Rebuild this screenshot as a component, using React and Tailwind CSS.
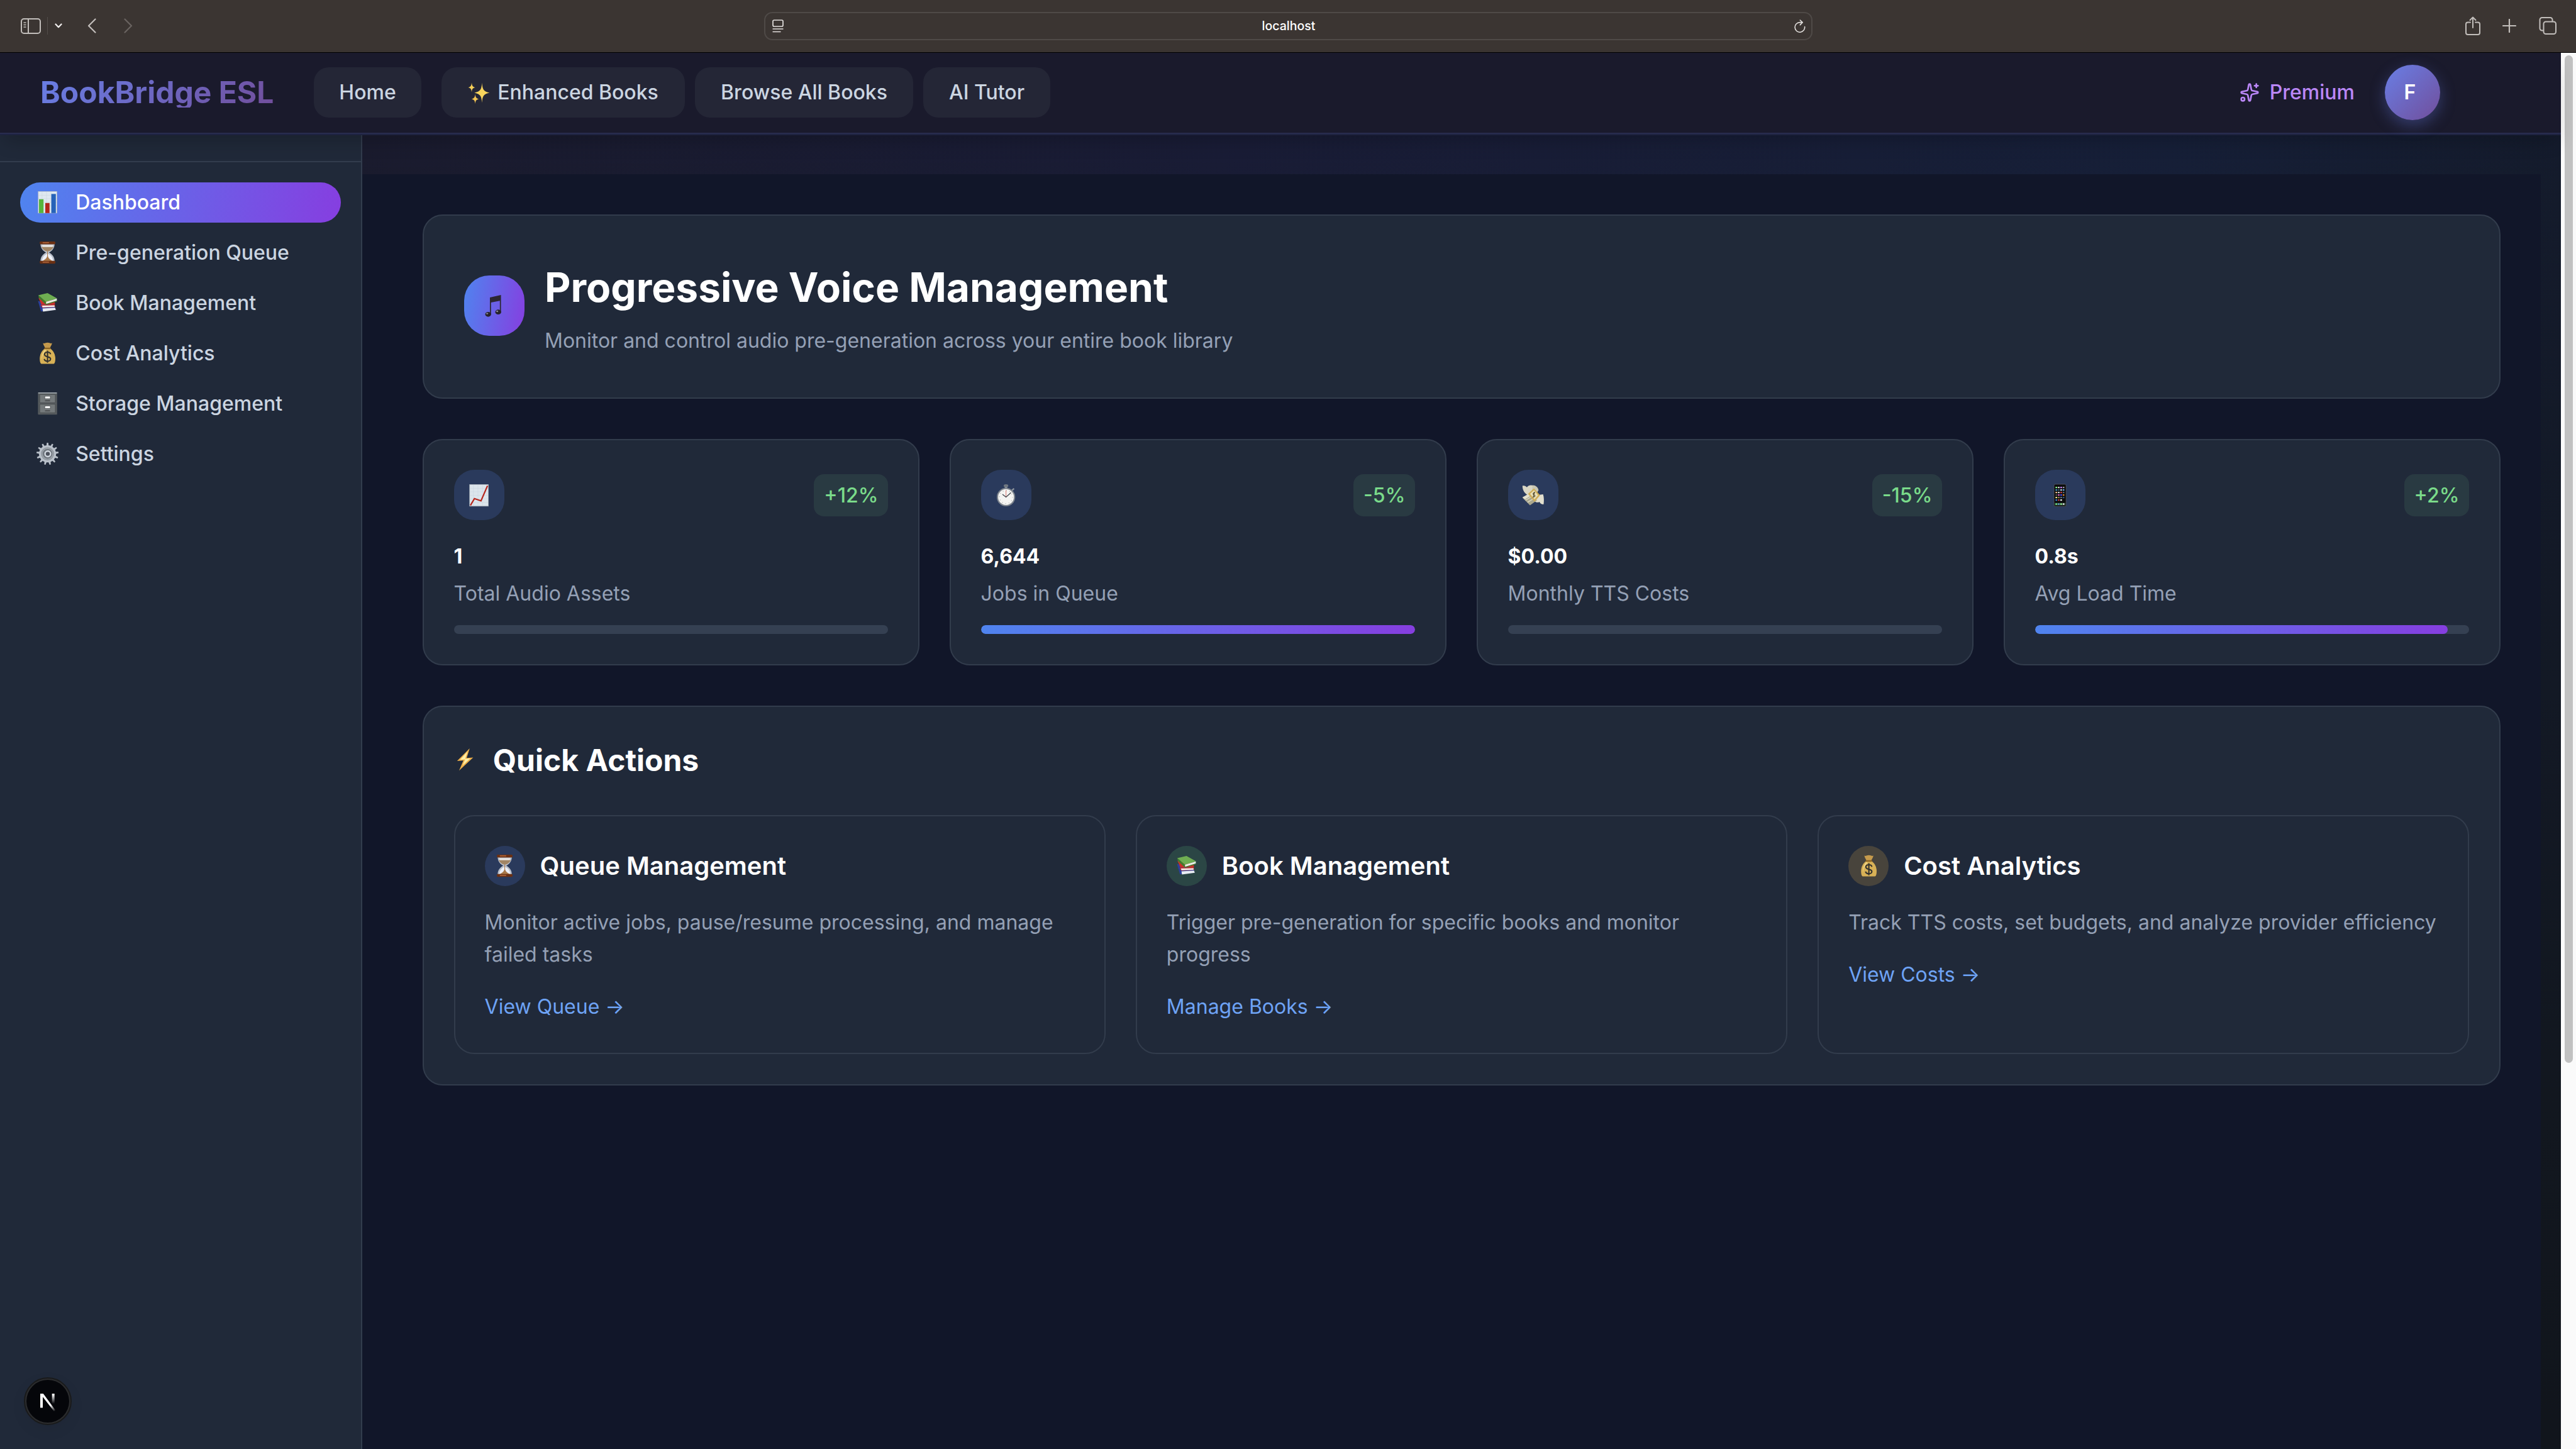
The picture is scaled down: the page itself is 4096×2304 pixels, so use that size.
import React from "react";
import { Sparkles } from "lucide-react";

/* ---------- emoji-style pictograms (44 x 44 grid) ---------- */

function Emoji({ children }) {
  return (
    <svg viewBox="0 0 44 44" className="block h-[35.2px] w-[35.2px] shrink-0 overflow-visible">
      {children}
    </svg>
  );
}

const BarChart = () => (
  <Emoji>
    <rect x="3.5" y="0.5" width="37" height="43" fill="#dfe8f0" stroke="#b4bcc6" />
    <path d="M4 8h36M4 15h36M4 22h36M4 29h36M4 36h36M11 1v42M20 1v42M29 1v42" stroke="#cbd6e0" strokeWidth="0.7" />
    <rect x="5" y="16" width="9" height="27.5" fill="#56b53c" />
    <rect x="17.5" y="23.500" width="8.500" height="20" fill="#b3261c" />
    <rect x="29.5" y="5.500" width="9" height="38" fill="#2562b8" />
  </Emoji>
);

const Hourglass = () => (
  <Emoji>
    <path d="M8 5h28c0 8-5 14-11 17 6 3 11 9 11 17H8c0-8 5-14 11-17C13 19 8 13 8 5z" fill="#b9bfca" />
    <path d="M11 7h22c-1 6-5 11-11 13C16 18 12 13 11 7z" fill="#e9e6e2" />
    <path d="M10 11c2 4 6 8 12 9 6-1 10-5 12-9z" fill="#a18565" />
    <path d="M11 38c1-7 5-12 11-14 6 2 10 7 11 14z" fill="#eef0f8" />
    <path d="M12 39c3-3 8-4 9.300-10V20h1.400v9C24 35 29 36 32 39z" fill="#a9794a" />
    <rect x="6.500" y="0" width="31" height="5.500" rx="1.800" fill="#6b3013" />
    <rect x="12" y="1.200" width="13" height="2.200" rx="1" fill="#a8623a" />
    <rect x="6.500" y="38.500" width="31" height="5.500" rx="1.800" fill="#6b3013" />
    <rect x="12" y="40" width="13" height="2.200" rx="1" fill="#a8623a" />
  </Emoji>
);

const Books = () => (
  <Emoji>
    <path d="M3 18l6 21 29-3.500-2-8z" fill="#2b3f9b" />
    <path d="M12 33l25-1.500 1.500 4.500L13 39.500z" fill="#e9ecf2" />
    <path d="M4 12l6 14 27-1-1-7z" fill="#c9302a" />
    <path d="M8 26.500l28-1.500 1.500 5L12 32z" fill="#c9302a" />
    <path d="M11 27.500l25-.5v3l-24 1z" fill="#f0eeee" />
    <path d="M3.500 7L22 2.500 41 13 19 20z" fill="#6fae52" />
    <path d="M3.500 7L19 20v5.500L5 12.500z" fill="#3f7d2e" />
    <path d="M19 20l21.500-6.500v4L19.500 24.500z" fill="#e9efe6" />
    <path d="M19 24l22-6.500v1.500L19 26z" fill="#3f7d2e" />
  </Emoji>
);

const MoneyBag = () => (
  <Emoji>
    <path d="M13 2c3 1.500 5-1 9-1s6 2.500 9 1c-.5 4-4 8-4.500 11h-9C17 10 13.500 6 13 2z" fill="#c59a4c" />
    <path d="M17 12.500h10C34 17 37.500 25 37.500 33c0 5-1 9-3 10h-25c-2-1-3-5-3-10 0-8 3.500-16 10.500-20.500z" fill="#d8b156" />
    <path d="M17 15c-5 5-7 12-6.500 20 1-7 3-14 9-19.500z" fill="#f1d98c" />
    <rect x="15.500" y="11" width="13" height="3" rx="1.500" fill="#8d6524" />
    <path d="M28 24c-.5-2.500-3-4-6-4s-6 1.500-6 4.500c0 6.500 12 3 12 9 0 3-3 4.500-6 4.500s-6-1.500-6.500-4.500M22 17v24" fill="none" stroke="#33322f" strokeWidth="2.600" />
  </Emoji>
);

const Cabinet = () => (
  <Emoji>
    <rect x="3" y="0" width="38" height="44" rx="1" fill="#565b5e" />
    <rect x="3.500" y="0" width="37" height="2" fill="#a5adb2" />
    <rect x="6.500" y="4" width="31" height="16.500" rx="1" fill="#74797b" stroke="#44484a" />
    <rect x="6.500" y="23.500" width="31" height="17" rx="1" fill="#74797b" stroke="#44484a" />
    <rect x="16.500" y="7.500" width="11" height="5" fill="#fff" stroke="#4d5153" />
    <rect x="16.500" y="27" width="11" height="5" fill="#fff" stroke="#4d5153" />
    <path d="M17 15.500h10v2H17zM17 35.500h10v2H17z" fill="#46494b" />
  </Emoji>
);

const TEETH = [0, 1, 2, 3, 4, 5, 6, 7, 8, 9, 10, 11, 12];

const Gear = () => (
  <Emoji>
    {TEETH.map((t) => (
      <path key={t} d="M19.800 6l.8-6h2.800l.8 6z" fill="#b9c0c9" transform={`rotate(${(t * 360) / 13} 22 22)`} />
    ))}
    <circle cx="22" cy="22" r="15" fill="#8d949c" stroke="#b9c0c9" strokeWidth="4" />
    <circle cx="22" cy="22" r="10.500" fill="#6f767e" stroke="#a1a8b0" strokeWidth="1.500" />
    <circle cx="22.500" cy="22" r="5.500" fill="#4d525d" stroke="#d0d6de" strokeWidth="3" />
  </Emoji>
);

const SparkleStars = () => (
  <Emoji>
    <path d="M28 2c1 14 3.500 17.500 15 20-11.500 2.500-14 6-15 20-1-14-3.500-17.500-15-20C24.500 19.500 27 16 28 2z" fill="#f8d45c" />
    <path d="M7.500 1.500c.6 6.500 2 8.500 7 9.800-5 1.300-6.400 3.300-7 9.700-.6-6.400-2-8.400-7-9.700 5-1.300 6.400-3.300 7-9.800z" fill="#f6cf58" />
    <path d="M14.500 24.500c.6 6.500 2 8.500 7 9.800-5 1.300-6.400 3.300-7 9.700-.6-6.400-2-8.400-7-9.700 5-1.300 6.400-3.300 7-9.800z" fill="#f3c552" />
  </Emoji>
);

const Notes = () => (
  <Emoji>
    <path d="M15 5L37 0v34h-2.200V11.500L17.200 15v24H15z" fill="#2c2733" />
    <ellipse cx="11.500" cy="38.500" rx="5.800" ry="4.800" fill="#26222b" />
    <ellipse cx="31.500" cy="34" rx="5.800" ry="4.800" fill="#26222b" />
    <ellipse cx="9.500" cy="37" rx="2" ry="1.500" fill="#8d8a96" />
    <ellipse cx="29.500" cy="32.500" rx="2" ry="1.500" fill="#8d8a96" />
  </Emoji>
);

const ChartUp = () => (
  <Emoji>
    <rect x="3.500" y="0.500" width="37" height="43" fill="#dce5ec" stroke="#aeb6bf" />
    <path d="M4 8h36M4 15h36M4 22h36M4 29h36M4 36h36M11 1v42M20 1v42M29 1v42" stroke="#cbd6e0" strokeWidth="0.700" />
    <path d="M5 42l8-13.500L26 33 39 3" fill="none" stroke="#b7271d" strokeWidth="2.800" />
  </Emoji>
);

const Stopwatch = () => (
  <Emoji>
    <rect x="19.500" y="4" width="5" height="5" fill="#8e959e" />
    <ellipse cx="22" cy="3" rx="4.500" ry="3" fill="#6f7781" />
    <path d="M34 12l4-3.500" stroke="#8e959e" strokeWidth="3" />
    <circle cx="22" cy="25.500" r="17" fill="#f4f4f2" stroke="#7e858e" strokeWidth="2.600" />
    <circle cx="22" cy="25.500" r="13" fill="none" stroke="#aaa" strokeWidth="1.600" strokeDasharray="1.200 5.600" />
    <path d="M22 25.500V12" stroke="#d4574c" strokeWidth="1" />
    <path d="M15 20l7 5.500 10-9" fill="none" stroke="#3c4248" strokeWidth="1.600" />
  </Emoji>
);

const MoneyWings = () => (
  <Emoji>
    <path d="M1 3c4-1 7 1 9 3 3-5 9-5 13-3l5 10-14 9C6 20 1 12 1 3z" fill="#d9d6c4" />
    <path d="M21 2c6 0 11 4 12 10l-4 6-9-5z" fill="#c9c6b2" />
    <path d="M43 40c-4 0-7-2-8-5-4 2-8 1-10-2l3-11 14-2c2 6 2 14 1 20z" fill="#e2dfce" />
    <path d="M1 27l14-8 15 13-14 10z" fill="#aaa78e" />
    <path d="M1 26l14-8 4 4-13 8z" fill="#e4e1cd" />
    <path d="M7 32l13-8M11 36l13-8" stroke="#e4e1cd" strokeWidth="1.500" />
    <path d="M12 19L24 8l12 14-11 13z" fill="#cfae58" />
    <path d="M16 19l8-7 8 10-7 8z" fill="#e8dfb6" />
    <path d="M26 17c-4-1-5 3-2 4s2 5-2 3.500M25 15l-3 12" fill="none" stroke="#554d32" strokeWidth="1.500" />
  </Emoji>
);

const PHONE_ROWS = [
  ["#8f8", "#ddd", "#c8f", "#999"],
  ["#49c", "#467", "#cde", "#6ae"],
  ["#eb8", "#ddd", "#c44", "#567"],
  ["#555", "#e6c", "#55f", "#d83"],
  ["#fe8", "#885", "#678", "#357"],
  ["#38d", "#c44", "#fff", "#111"],
];

const Phone = () => (
  <Emoji>
    <rect x="10" y="0" width="24" height="44" rx="2.500" fill="#0b0b0d" stroke="#55585e" strokeWidth="1" />
    {PHONE_ROWS.map((row, r) =>
      row.map((c, i) => <rect key={r + "-" + i} x={13 + i * 4.8} y={5 + r * 5} width="3.200" height="2.800" fill={c} />)
    )}
    <rect x="11" y="37" width="22" height="5" fill="#2c4637" />
    {["#7e8", "#6ad", "#9f9", "#eee"].map((c, i) => (
      <rect key={c} x={13 + i * 4.8} y="38" width="3.200" height="2.800" fill={c} />
    ))}
  </Emoji>
);

const Bolt = () => (
  <Emoji>
    <path d="M31 0L6 25l12.500-1L10 44l28-26-13 1z" fill="#eeb04a" />
    <path d="M27 6L12 22.500l10-.5-5 12 15-14-10 .5z" fill="#fdf0a8" />
  </Emoji>
);

/* ---------- browser toolbar ---------- */

function Toolbar() {
  return (
    <div className="flex h-[84px] shrink-0 items-center justify-between border-b border-black bg-[#3b3532]">
      <div className="flex w-[1214px] items-center pb-[1px]">
        <svg viewBox="0 0 32 25" className="ml-[33px] h-[25px] w-8" fill="none" stroke="#c2bebb" strokeWidth="2">
          <rect x="1" y="1" width="30" height="23" rx="4" />
          <path d="M12 1v23" />
          <path d="M4.500 7h4M4.500 10.500h4M4.500 14h4" strokeWidth="1.500" />
        </svg>
        <div className="ml-2.5 h-7 w-px bg-[#534e4b]" />
        <svg viewBox="0 0 12 8" className="ml-[11px] h-2 w-3" fill="none" stroke="#f1efee" strokeWidth="2.200" strokeLinecap="round" strokeLinejoin="round">
          <path d="M1.500 1.500L6 6.200l4.500-4.700" />
        </svg>
        <svg viewBox="0 0 14 24" className="ml-10 h-6 w-3.5" fill="none" stroke="#c2bebb" strokeWidth="2.200" strokeLinecap="round" strokeLinejoin="round">
          <path d="M12.500 1.500L2 12l10.500 10.500" />
        </svg>
        <svg viewBox="0 0 14 24" className="ml-11 h-6 w-3.5" fill="none" stroke="#6a6461" strokeWidth="2.200" strokeLinecap="round" strokeLinejoin="round">
          <path d="M1.500 1.500L12 12 1.500 22.500" />
        </svg>
      </div>

      <div className="flex h-[45px] w-[1667px] shrink-0 items-center justify-between rounded-[13px] border-2 border-[#4f4a47] pr-[9px] pl-[11px]">
        <svg viewBox="0 0 18 21" className="h-[21px] w-[18px]" fill="none" stroke="#e3e0de" strokeWidth="1.700">
          <rect x="1" y="1" width="16" height="10" rx="2" />
          <path d="M.5 15h17M.5 19.500h13" />
        </svg>
        <span className="text-[19.500px] leading-none font-medium text-white">localhost</span>
        <svg viewBox="0 0 18 21" className="h-[21px] w-[18px]" fill="none" stroke="#e3e0de" strokeWidth="1.600" strokeLinecap="round" strokeLinejoin="round">
          <path d="M16.600 11.500A7.800 7.800 0 1 1 8.800 4.600H13" />
          <path d="M9.300 1L13 4.600 9.300 8.600" />
        </svg>
      </div>

      <div className="flex w-[1214px] items-center justify-end pr-[31px] pb-[2px]">
        <svg viewBox="0 0 24 30" className="h-[30px] w-6" fill="none" stroke="#c2bebb" strokeWidth="2" strokeLinecap="round" strokeLinejoin="round">
          <path d="M8 9.500H4a3 3 0 0 0-3 3V26a3 3 0 0 0 3 3h16a3 3 0 0 0 3-3V12.500a3 3 0 0 0-3-3h-4" />
          <path d="M12 18V1.500M7.500 6L12 1.500 16.500 6" />
        </svg>
        <svg viewBox="0 0 22 22" className="ml-[35px] h-[22px] w-[22px]" fill="none" stroke="#c2bebb" strokeWidth="2.200" strokeLinecap="round">
          <path d="M11 1v20M1 11h20" />
        </svg>
        <svg viewBox="0 0 28 28" className="ml-9 h-7 w-7" fill="none" stroke="#c2bebb" strokeWidth="2">
          <rect x="7.500" y="7.500" width="19.500" height="19.500" rx="3.500" />
          <path d="M7.500 21.500H5A3.500 3.500 0 0 1 1.500 18V4.500A3.500 3.500 0 0 1 5 1h13a3.500 3.500 0 0 1 3.500 3.500v3" />
        </svg>
      </div>
    </div>
  );
}

/* ---------- site header ---------- */

function Header() {
  const link = "flex h-20 items-center rounded-3xl bg-[#242636] text-[32px] font-medium text-[#cbd5e1]";
  return (
    <header className="relative z-10 flex h-[128.800px] shrink-0 items-center border-b-2 border-[#282c4f] bg-[#1a1a2c] pr-48 pl-16 shadow-[0_2px_0_#1e2340,0_18px_28px_-8px_rgba(0,0,0,0.22)]">
      <div className="w-[435px] shrink-0">
        <span className="inline-block bg-linear-[135deg,#697fe6,#714e9b] bg-clip-text align-top text-5xl leading-none font-bold whitespace-nowrap text-transparent">
          BookBridge ESL
        </span>
      </div>
      <nav className="flex items-center gap-4">
        <a className={link + " mr-4 w-[171px] justify-center"}>Home</a>
        <a className={link + " w-[387px] gap-3 pl-[42px] whitespace-nowrap"}>
          <SparkleStars />
          Enhanced Books
        </a>
        <a className={link + " w-[347px] justify-center"}>Browse All Books</a>
        <a className={link + " w-[202px] justify-center"}>AI Tutor</a>
      </nav>
      <div className="ml-auto flex items-center gap-12">
        <div className="flex items-center gap-4 text-[32px] font-medium text-[#ba87f7]">
          <Sparkles size={32} strokeWidth={2} />
          Premium
        </div>
        <div className="flex h-[88px] w-[88px] items-center justify-center rounded-full bg-linear-[135deg,#697fe6,#714e9b] pr-2 text-[32px] font-semibold text-white shadow-[0_8px_24px_rgba(102,126,234,0.35)]">
          F
        </div>
      </div>
    </header>
  );
}

/* ---------- sidebar ---------- */

const MENU = [
  [BarChart, "Dashboard"],
  [Hourglass, "Pre-generation Queue"],
  [Books, "Book Management"],
  [MoneyBag, "Cost Analytics"],
  [Cabinet, "Storage Management"],
  [Gear, "Settings"],
];

function Sidebar() {
  return (
    <aside className="flex w-[576px] shrink-0 flex-col border-r-2 border-[#323c4d] bg-[#202939]">
      <div className="h-[45px] shrink-0 border-b-2 border-[#323c4d]" />
      <nav className="flex flex-col gap-4 px-8 pt-[31.800px]">
        {MENU.map(([Icon, label], i) => (
          <a
            key={label}
            className={
              "flex h-16 items-center gap-[27px] rounded-full pl-[26px] text-[32px] font-medium whitespace-nowrap " +
              (i === 0 ? "bg-linear-[100deg,#4f84ef,#863ee0] text-white" : "text-[#cbd5e1]")
            }
          >
            <Icon />
            {label}
          </a>
        ))}
      </nav>
      <div className="mt-auto mb-[38px] ml-[38px] flex h-[76px] w-[76px] items-center justify-center rounded-full border-2 border-[#191a1b] bg-[#2b2c2e] p-[2px] shadow-[0_8px_24px_rgba(0,0,0,0.06)]">
        <div className="flex h-full w-full items-center justify-center rounded-full bg-[#05060a]">
          <svg viewBox="0 0 90 105" className="mt-1 h-7 w-6">
            <defs>
              <linearGradient id="diag" x1="40" y1="45" x2="90" y2="105" gradientUnits="userSpaceOnUse">
                <stop offset="0.4" stopColor="#fff" />
                <stop offset="1" stopColor="#fff" stopOpacity="0" />
              </linearGradient>
              <linearGradient id="stem" x1="0" y1="0" x2="0" y2="60" gradientUnits="userSpaceOnUse">
                <stop offset="0.100" stopColor="#fff" />
                <stop offset="1" stopColor="#fff" stopOpacity="0" />
              </linearGradient>
            </defs>
            <rect x="0" y="0" width="15" height="84" fill="#fff" />
            <path d="M0 0h18l72 98-8 7z" fill="url(#diag)" />
            <rect x="70" y="0" width="15" height="60" fill="url(#stem)" />
          </svg>
        </div>
      </div>
    </aside>
  );
}

/* ---------- dashboard ---------- */

const CARD = "rounded-[32px] border-2 border-[#323c4c] bg-[#202939]";

const STATS = [
  { Icon: ChartUp, change: "+12%", value: "1", label: "Total Audio Assets", fill: 0 },
  { Icon: Stopwatch, change: "-5%", value: "6,644", label: "Jobs in Queue", fill: 100 },
  { Icon: MoneyWings, change: "-15%", value: "$0.00", label: "Monthly TTS Costs", fill: 0 },
  { Icon: Phone, change: "+2%", value: "0.8s", label: "Avg Load Time", fill: 95 },
];

function StatCard({ Icon, change, value, label, fill }) {
  return (
    <div className={CARD + " h-[360px] p-[47.600px]"}>
      <div className="flex items-center justify-between">
        <div className="flex h-20 w-20 items-center justify-center rounded-[32px] bg-[#2a3a5c]">
          <Icon />
        </div>
        <div className="rounded-2xl bg-[#293a42] px-4 py-2 font-medium text-[#7adb8a]">{change}</div>
      </div>
      <div className="mt-8 font-bold text-white">{value}</div>
      <div className="mt-2 text-[#94a0b5]">{label}</div>
      <div className="mt-6 h-[14px] overflow-hidden rounded-full bg-[#354052]">
        <div className="h-full rounded-full bg-linear-[100deg,#4f84ef,#863ee0]" style={{ width: fill + "%" }} />
      </div>
    </div>
  );
}

const ACTIONS = [
  {
    Icon: Hourglass,
    tint: "bg-[#2a3a5c]",
    title: "Queue Management",
    text: "Monitor active jobs, pause/resume processing, and manage failed tasks",
    link: "View Queue →",
  },
  {
    Icon: Books,
    tint: "bg-[#2b4645]",
    title: "Book Management",
    text: "Trigger pre-generation for specific books and monitor progress",
    link: "Manage Books →",
  },
  {
    Icon: MoneyBag,
    tint: "bg-[#48443c]",
    title: "Cost Analytics",
    text: "Track TTS costs, set budgets, and analyze provider efficiency",
    link: "View Costs →",
  },
];

function ActionCard({ Icon, tint, title, text, link }) {
  return (
    <div className={CARD + " h-[380.800px] p-[47px]"}>
      <div className="flex items-center gap-6">
        <div className={"flex h-16 w-16 items-center justify-center rounded-full " + tint}>
          <Icon />
        </div>
        <h3 className="text-[40px] font-semibold text-white">{title}</h3>
      </div>
      <p className="mt-8 text-[#94a0b5]">{text}</p>
      <a className="mt-8 block text-[#6ea3f5]">{link}</a>
    </div>
  );
}

function Main() {
  return (
    <main className="flex flex-1 bg-[linear-gradient(to_bottom,transparent_0%,#12171f_75%,#11151c_100%),linear-gradient(to_right,#1a1b2e,#191c36_40%,#161f38_82%,#141b2c)] pt-16 pr-8">
      <div className="flex flex-1 flex-col gap-16 bg-[#111629] pt-16 pr-16 pl-24 text-[32px] leading-[1.600]">
        <section className={CARD + " flex h-[292.800px] items-center gap-8 px-16 pb-[1.500px]"}>
          <div className="flex h-24 w-24 items-center justify-center rounded-[40px] bg-linear-[100deg,#4f84ef,#863ee0] pr-0.5">
            <Notes />
          </div>
          <div>
            <h1 className="text-[64px] font-bold text-white">Progressive Voice Management</h1>
            <p className="mt-2 text-[#94a0b5]">Monitor and control audio pre-generation across your entire book library</p>
          </div>
        </section>

        <section className="grid grid-cols-4 gap-12">
          {STATS.map((s) => (
            <StatCard key={s.label} {...s} />
          ))}
        </section>

        <section className={CARD + " h-[604.800px] p-[47.600px]"}>
          <div className="flex items-center gap-[27px]">
            <div className="pb-1">
              <Bolt />
            </div>
            <h2 className="text-5xl leading-[1.600] font-bold text-white">Quick Actions</h2>
          </div>
          <div className="mt-[47.600px] grid grid-cols-3 gap-12">
            {ACTIONS.map((a) => (
              <ActionCard key={a.title} {...a} />
            ))}
          </div>
        </section>
      </div>
    </main>
  );
}

export default function App() {
  return (
    <div className="flex h-[2304px] w-[4096px] flex-col overflow-hidden bg-[#111629] font-['Inter',sans-serif]">
      <Toolbar />
      <div className="flex min-h-0 flex-1">
        <div className="flex w-[4072px] shrink-0 flex-col">
          <Header />
          <div className="flex min-h-0 flex-1">
            <Sidebar />
            <Main />
          </div>
        </div>
        <div className="flex w-6 shrink-0 justify-center bg-[#fafafa] pt-1">
          <div className="h-[1602px] w-[13px] rounded-full bg-[#c1c1c1]" />
        </div>
      </div>
    </div>
  );
}
